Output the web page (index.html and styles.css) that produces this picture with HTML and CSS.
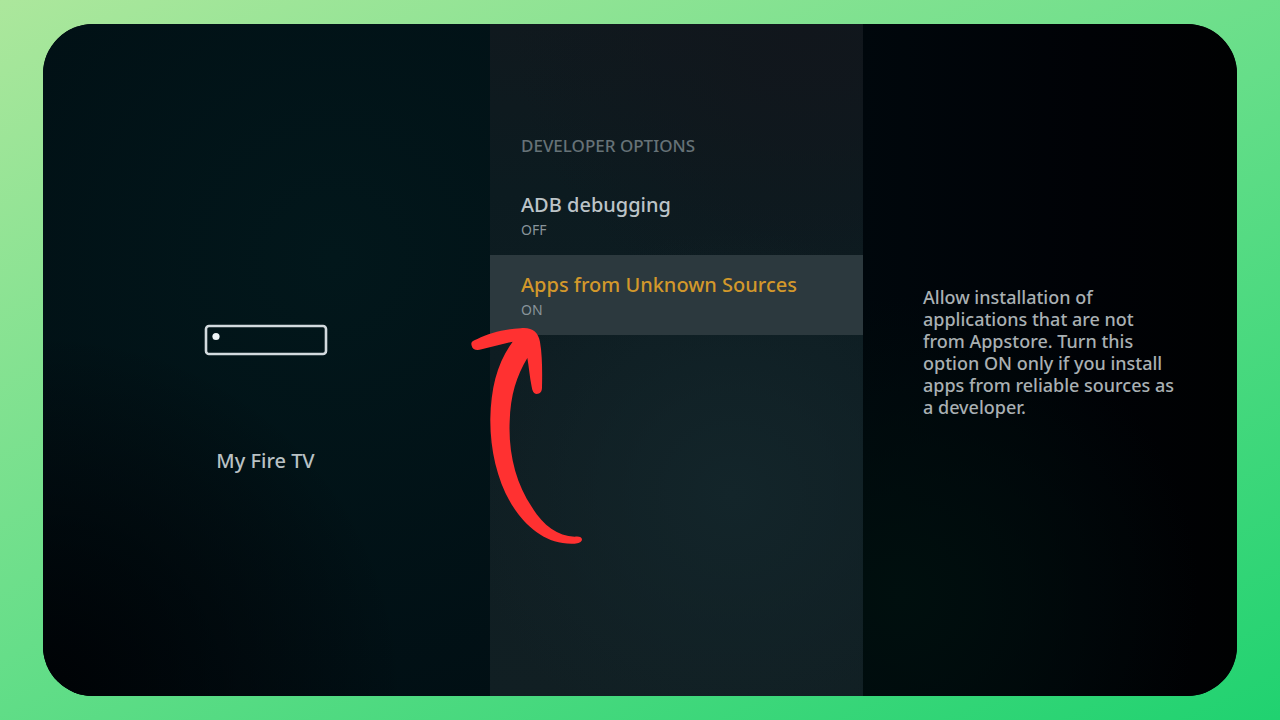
FILE: index.html
```
<!DOCTYPE html>
<html lang="en">
<head>
<meta charset="utf-8">
<title>Developer Options</title>
<link rel="stylesheet" href="styles.css">
</head>
<body>
<main class="screen">
  <section class="device">
    <svg class="device-icon" viewBox="0 0 124 32" aria-hidden="true">
      <rect x="2" y="2" width="120" height="28" rx="3" fill="none" stroke="#d3dade" stroke-width="2.6"/>
      <circle cx="12" cy="12.500" r="3.600" fill="#eef4f6"/>
    </svg>
    <p class="device-name">My Fire TV</p>
  </section>
  <section class="options">
    <h1 class="options-heading">DEVELOPER OPTIONS</h1>
    <button class="option" type="button">
      <span class="option-title">ADB debugging</span>
      <span class="option-state">OFF</span>
    </button>
    <button class="option option-selected" type="button">
      <span class="option-title">Apps from Unknown Sources</span>
      <span class="option-state">ON</span>
    </button>
    <svg class="arrow" viewBox="0 0 420 750" aria-hidden="true">
      <path fill="#ff3131" d="M35 107C31 96 40 91 52 87C88 68 135 57 182 55C215 51 235 66 240 96C247 135 247 188 246 232C246 246 240 252 230 252C220 251 217 241 215 230C209 202 207 172 202 144C170 197 151 255 149 335C145 430 168 520 216 592C249 646 293 678 344 680C357 678 366 681 366 689C365 696 355 700 344 701C268 705 210 661 168 603C117 532 90 429 91 326C93 232 112 157 158 95L65 118C49 123 38 119 35 107Z"/>
    </svg>
  </section>
  <aside class="details">
    <p class="description">Allow installation of applications that are not from Appstore. Turn this option ON only if you install apps from reliable sources as a developer.</p>
  </aside>
</main>
</body>
</html>
```
FILE: styles.css
```
* {
  box-sizing: border-box;
}

body {
  margin: 0;
  min-height: 100vh;
  display: flex;
  padding: 24px 43px;
  background: linear-gradient(155deg, #ace79c, #66de89 50%, #20d270);
  font-family: "Noto Sans", "Open Sans", sans-serif;
  color: #b9c1c4;
}

.screen {
  flex: 1;
  display: grid;
  grid-template-columns: 447fr 373fr 374fr;
  border-radius: 50px;
  overflow: hidden;
  background: #000508;
}

.device {
  display: flex;
  flex-direction: column;
  align-items: center;
  gap: 90px;
  padding: 300px 2px 0 0;
  background:
    radial-gradient(circle at 0% 100%, #000205, transparent 45%),
    radial-gradient(circle at 65% 35%, #02171b, #010f14 90%);
}

.device-icon {
  width: 124px;
  height: 32px;
}

.device-name {
  margin: 0;
  font-size: 20px;
  line-height: 30px;
  font-weight: 500;
}

.options {
  position: relative;
  padding-top: 112px;
  background:
    radial-gradient(circle at 65% 70%, #13252a, transparent 50%),
    radial-gradient(circle at 85% 0%, #11161c, transparent 40%),
    linear-gradient(to bottom, #10191e, #0c1b20 25%, #0e1d22 50%, #111f23);
}

.options-heading {
  margin: 0 0 19px;
  padding: 0 31px;
  font-size: 17px;
  line-height: 20px;
  font-weight: 500;
  color: #667277;
}

.option {
  display: block;
  width: 100%;
  padding: 15px 31px;
  border: 0;
  background: transparent;
  font-family: inherit;
  text-align: left;
  color: #bcc4c8;
}

.option-selected {
  background: #2c393e;
}

.option-title {
  display: block;
  font-size: 20px;
  line-height: 30px;
  font-weight: 500;
}

.option-selected .option-title {
  color: #d3982b;
}

.option-state {
  display: block;
  font-size: 14px;
  line-height: 20px;
  color: #89949a;
}

.arrow {
  position: absolute;
  left: -30px;
  top: 286px;
  width: 140px;
  height: 250px;
}

.details {
  padding: 262px 62px 0 60px;
  background:
    radial-gradient(circle at 10% 85%, #000f0e, transparent 45%),
    linear-gradient(to right, #00070c, #000206 60%, #000102);
}

.description {
  margin: 0;
  font-size: 18px;
  line-height: 22px;
  font-weight: 500;
  color: #a9b0b3;
}
```
